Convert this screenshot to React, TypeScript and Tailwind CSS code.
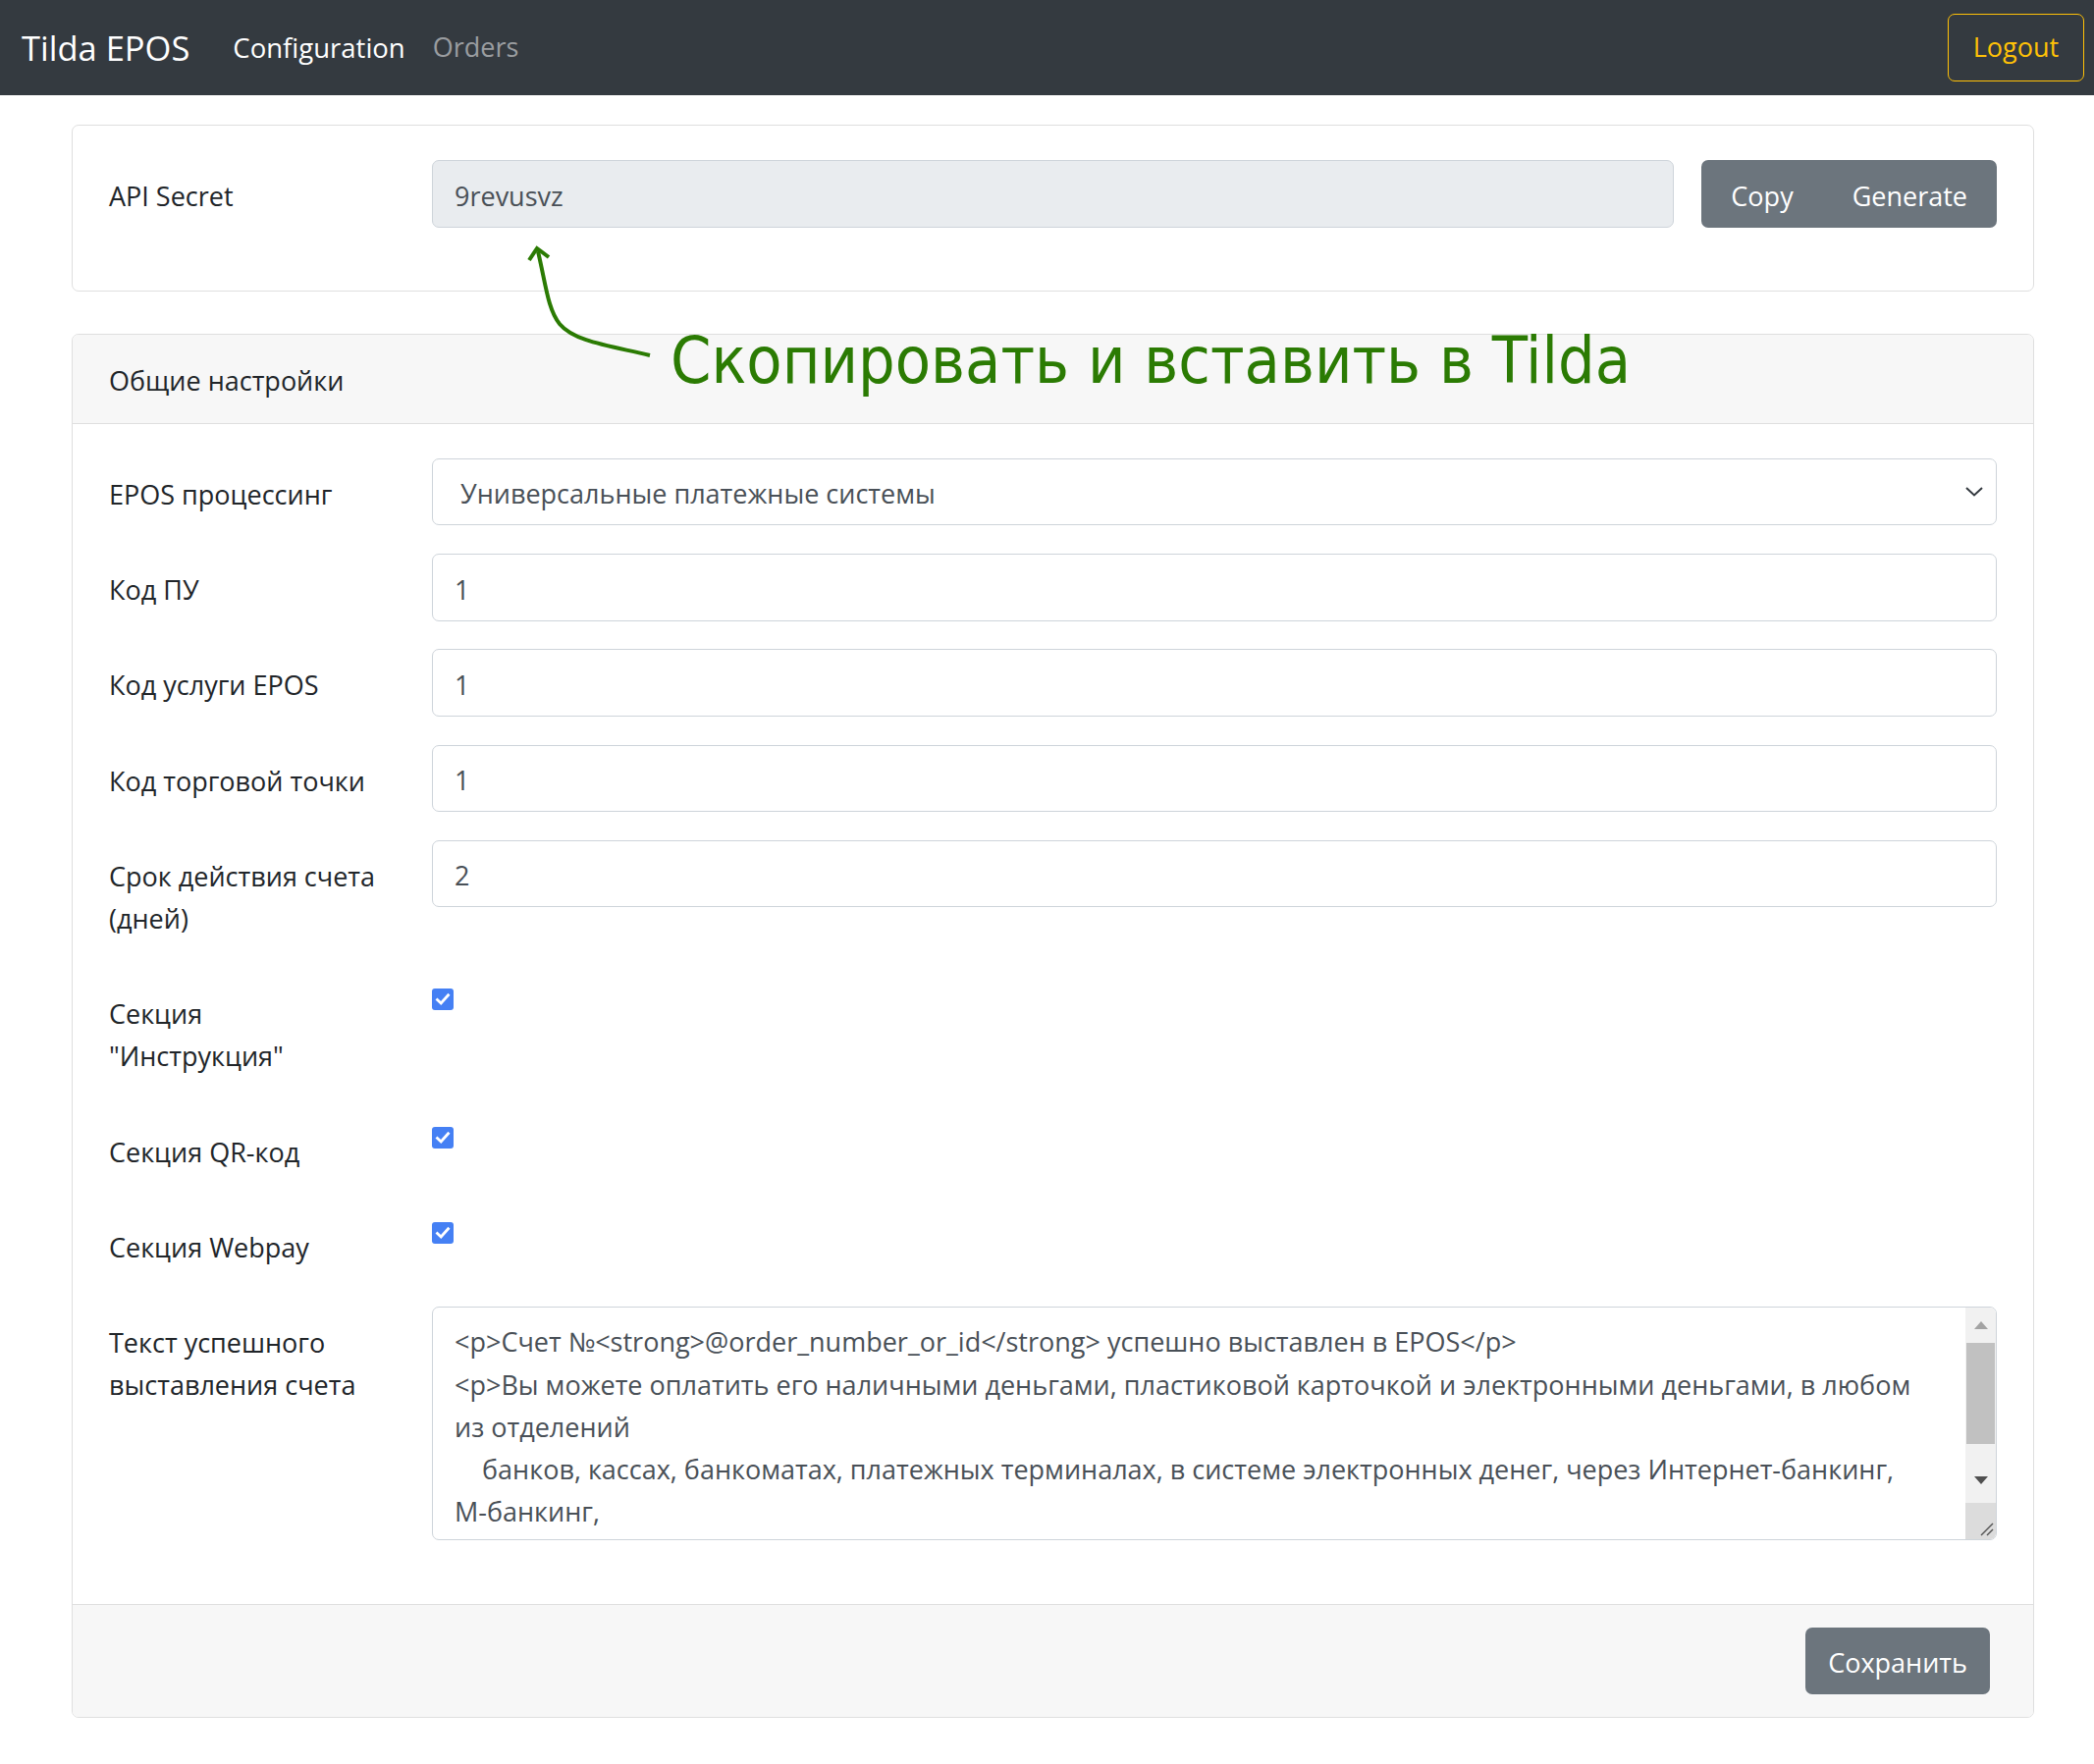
import React from "react";

const FONT = "font-['Open_Sans','Noto_Sans',sans-serif]";

function Row({
  label,
  children,
}: {
  label: React.ReactNode;
  children: React.ReactNode;
}) {
  return (
    <div className="flex items-start mb-[28.8px]">
      <div className="w-[276px] mr-[53px] pt-[15px] pb-[10.2px] leading-[43.2px] text-[#212529] whitespace-nowrap">
        {label}
      </div>
      <div className="flex-1 min-w-0">{children}</div>
    </div>
  );
}

function TextInput({ value }: { value: string }) {
  return (
    <div className="h-[68.4px] border border-[#ced4da] rounded-[7px] bg-white px-[22px] pt-[5px] flex items-center text-[#495057]">
      {value}
    </div>
  );
}

function Check() {
  return (
    <div className="pt-[11px]">
      <div className="w-[22px] h-[22px] rounded-[3px] bg-[#4580f4] flex items-center justify-center">
        <svg width="16" height="16" viewBox="0 0 16 16">
          <path
            d="M2.5 8.5 L6.2 12 L13.5 3.8"
            fill="none"
            stroke="white"
            strokeWidth="2.8"
            strokeLinecap="square"
          />
        </svg>
      </div>
    </div>
  );
}

export default function App() {
  const lines = [
    "<p>Счет №<strong>@order_number_or_id</strong> успешно выставлен в EPOS</p>",
    "<p>Вы можете оплатить его наличными деньгами, пластиковой карточкой и электронными деньгами, в любом",
    "из отделений",
    "    банков, кассах, банкоматах, платежных терминалах, в системе электронных денег, через Интернет-банкинг,",
    "М-банкинг,",
  ];
  return (
    <div className={`relative min-h-[1797px] bg-white text-[27px] ${FONT}`}>
      {/* Navbar */}
      <nav className="h-[97px] bg-[#343a40] flex items-center pl-[22px] pr-[10px]">
        <span className="text-[34.5px] text-white">Tilda EPOS</span>
        <span className="ml-[44px] text-[27.5px] text-white">Configuration</span>
        <span className="ml-[28px] text-[27px] text-[#9a9da0]">Orders</span>
        <button className="ml-auto h-[69px] w-[139px] border border-[#ffc107] rounded-[7px] text-[#ffc107] flex items-center justify-center">
          Logout
        </button>
      </nav>

      <main className="ml-[73px] w-[1999px] pt-[30px]">
        {/* API Secret card */}
        <div className="border border-[#dfdfdf] rounded-[7px] pt-[35px] pb-[64px] px-[37px]">
          <div className="flex items-center">
            <div className="w-[276px] mr-[53px] pt-[5px] text-[#212529]">API Secret</div>
            <div className="flex-1 h-[68.4px] bg-[#e9ecef] border border-[#ced4da] rounded-[7px] px-[22px] pt-[5px] flex items-center text-[#495057]">
              9revusvz
            </div>
            <div className="ml-[28px] flex h-[69px] rounded-[7px] bg-[#6c757d] text-white overflow-hidden">
              <button className="px-[30px] pt-[5px]">Copy</button>
              <button className="px-[30px] pt-[5px]">Generate</button>
            </div>
          </div>
        </div>

        {/* Settings card */}
        <div className="mt-[43px] border border-[#dfdfdf] rounded-[7px] overflow-hidden">
          <div className="h-[91px] bg-[#f7f7f7] border-b border-[#dfdfdf] px-[37px] pt-[5px] flex items-center text-[#212529]">
            Общие настройки
          </div>
          <div className="pt-[35px] pb-[36px] px-[37px]">
            <Row label="EPOS процессинг">
              <div className="h-[68.4px] border border-[#ced4da] rounded-[7px] bg-white pl-[28px] pr-[12px] flex items-center text-[#495057]">
                <span className="flex-1 pt-[5px]">Универсальные платежные системы</span>
                <svg width="20" height="12" viewBox="0 0 20 12">
                  <path d="M2 2 L10 9.5 L18 2" fill="none" stroke="#343a40" strokeWidth="2" />
                </svg>
              </div>
            </Row>
            <Row label="Код ПУ">
              <TextInput value="1" />
            </Row>
            <Row label="Код услуги EPOS">
              <TextInput value="1" />
            </Row>
            <Row label="Код торговой точки">
              <TextInput value="1" />
            </Row>
            <Row
              label={
                <>
                  Срок действия счета
                  <br />
                  (дней)
                </>
              }
            >
              <TextInput value="2" />
            </Row>
            <Row
              label={
                <>
                  Секция
                  <br />
                  "Инструкция"
                </>
              }
            >
              <Check />
            </Row>
            <Row label="Секция QR-код">
              <Check />
            </Row>
            <Row label="Секция Webpay">
              <Check />
            </Row>
            <Row
              label={
                <>
                  Текст успешного
                  <br />
                  выставления счета
                </>
              }
            >
              <div className="h-[238px] border border-[#ced4da] rounded-[7px] bg-white flex overflow-hidden">
                <div className="flex-1 min-w-0 pl-[22px] pt-[13.5px] overflow-hidden text-[#495057] leading-[43.2px]">
                  {lines.map((l, i) => (
                    <div key={i} className="whitespace-pre">
                      {l}
                    </div>
                  ))}
                </div>
                <div className="w-[31px] flex flex-col bg-[#f1f1f1]">
                  <div className="h-[36px] flex items-center justify-center">
                    <svg width="14" height="8" viewBox="0 0 14 8">
                      <path d="M0 8 L7 0 L14 8 Z" fill="#a3a3a3" />
                    </svg>
                  </div>
                  <div className="h-[103px] mx-[1px] bg-[#c1c1c1]" />
                  <div className="flex-1 flex items-center justify-center">
                    <svg width="14" height="8" viewBox="0 0 14 8" className="mt-[14px]">
                      <path d="M0 0 L14 0 L7 8 Z" fill="#505050" />
                    </svg>
                  </div>
                  <div className="h-[37px] bg-[#dcdcdc] relative">
                    <svg width="31" height="37" viewBox="0 0 31 37" className="absolute inset-0">
                      <path d="M16 33 L28 21" stroke="#555" strokeWidth="1.5" />
                      <path d="M22 33 L28 27" stroke="#555" strokeWidth="1.5" />
                    </svg>
                  </div>
                </div>
              </div>
            </Row>
          </div>
          <div className="bg-[#f7f7f7] border-t border-[#dfdfdf] py-[23px] pr-[44px] flex justify-end">
            <button className="h-[68px] px-[23px] pt-[5px] rounded-[7px] bg-[#6c757d] text-white">
              Сохранить
            </button>
          </div>
        </div>
      </main>

      {/* Annotation overlay */}
      <svg
        className="absolute left-0 top-0 pointer-events-none"
        width="700"
        height="400"
        viewBox="0 0 700 400"
      >
        <path
          d="M662 362 C 620 352, 585 348, 570 330 C 558 315, 556 290, 548 256"
          fill="none"
          stroke="#2b7b03"
          strokeWidth="4"
        />
        <path d="M539 265 L547 253 L559 262" fill="none" stroke="#2b7b03" strokeWidth="4" />
      </svg>
      <div className="absolute left-[683px] top-[323px] text-[66px] leading-[90px] text-[#2b7b03] whitespace-nowrap font-['DejaVu_Sans_Condensed','DejaVu_Sans',sans-serif] [font-stretch:condensed]">
        Скопировать и вставить в Tilda
      </div>
    </div>
  );
}
